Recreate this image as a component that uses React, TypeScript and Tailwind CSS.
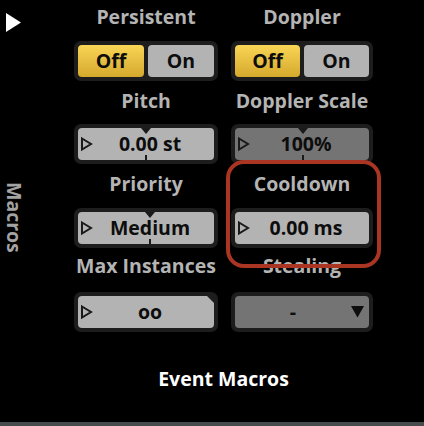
import React from "react";

function Frame({ children }: { children: React.ReactNode }) {
  return <div className="h-[40px] rounded-[7px] bg-[#1d1d1d] p-[4px]">{children}</div>;
}

function PlayOutline() {
  return (
    <svg className="absolute left-[2px] top-1/2 -translate-y-1/2" width="13" height="15" viewBox="0 0 13 15">
      <path d="M2 2 L11 7.5 L2 13 Z" fill="none" stroke="#1a1a1a" strokeWidth="2" strokeLinejoin="miter" />
    </svg>
  );
}

function Knob({
  value,
  notch,
  dark,
  corner,
}: {
  value: string;
  notch?: string;
  dark?: boolean;
  corner?: boolean;
}) {
  return (
    <Frame>
      <div
        className={
          "relative h-full rounded-[4px] flex items-center justify-center " +
          (dark ? "bg-[#747474] " : "bg-[#b3b3b3] ") +
          (corner ? "[clip-path:polygon(0_0,calc(100%-7px)_0,100%_7px,100%_100%,0_100%)]" : "")
        }
      >
        <PlayOutline />
        <span className="pl-[8px] text-[19.5px] leading-[24px] font-bold text-[#0d0d0d]">{value}</span>
        {notch && (
          <>
            <div className={"absolute top-0 h-0 w-0 border-l-[5px] border-r-[5px] border-t-[6px] border-l-transparent border-r-transparent border-t-[#1a1a1a] -translate-x-1/2 " + notch}></div>
            <div className={"absolute bottom-0 h-[5px] w-[2px] bg-[#1a1a1a] -translate-x-1/2 " + notch}></div>
          </>
        )}
      </div>
    </Frame>
  );
}

function Toggle() {
  return (
    <Frame>
      <div className="flex h-full gap-[4px]">
        <div className="flex flex-1 items-center justify-center rounded-[4px] bg-gradient-to-b from-[#f9d555] to-[#d5a92c] text-[19.5px] leading-[24px] font-bold text-[#0d0d0d]">
          Off
        </div>
        <div className="flex flex-1 items-center justify-center rounded-[4px] bg-[#b3b3b3] text-[19.5px] leading-[24px] font-bold text-[#0d0d0d]">
          On
        </div>
      </div>
    </Frame>
  );
}

function Dropdown() {
  return (
    <Frame>
      <div className="relative flex h-full items-center rounded-[4px] bg-[#747474]">
        <span className="w-full pr-[18px] text-center text-[19.5px] leading-[24px] font-bold text-[#0d0d0d]">-</span>
        <svg className="absolute right-[5px] top-[10px]" width="13" height="12" viewBox="0 0 13 12">
          <path d="M0 0 L13 0 L6.5 11.5 Z" fill="#0d0d0d" />
        </svg>
      </div>
    </Frame>
  );
}

function Label({ text, cls }: { text: string; cls: string }) {
  return (
    <div className={"text-center text-[19.5px] leading-[24px] font-bold text-[#b4b4b4] " + cls}>{text}</div>
  );
}

export default function App() {
  return (
    <div className="relative flex h-[426px] w-[424px] flex-col overflow-hidden bg-black font-['Open_Sans',sans-serif]">
      <div className="flex">
        <div className="flex w-[74px] flex-col">
          <div className="flex w-[27px] flex-col items-center pt-[13px]">
            <svg width="15" height="19" viewBox="0 0 15 19">
              <path d="M0 0 L15 9.5 L0 19 Z" fill="#ffffff" />
            </svg>
            <div className="mt-[150px] text-[19.5px] leading-[24px] font-bold text-[#a3a3a3] [writing-mode:vertical-rl]">
              Macros
            </div>
          </div>
        </div>
        <div className="grid grid-cols-[144px_142px] gap-x-[13px]">
          <div>
            <Label text="Persistent" cls="h-[41px] pt-[5px]" />
            <Toggle />
            <Label text="Pitch" cls="h-[43px] pt-[8px]" />
            <Knob value="0.00 st" notch="left-[68px]" />
            <Label text="Priority" cls="h-[44px] pt-[8px]" />
            <Knob value="Medium" notch="left-[72px]" />
            <Label text="Max Instances" cls="h-[44px] pt-[6px]" />
            <Knob value="oo" corner />
          </div>
          <div>
            <Label text="Doppler" cls="h-[41px] pt-[5px]" />
            <Toggle />
            <Label text="Doppler Scale" cls="h-[43px] pt-[8px]" />
            <Knob value="100%" notch="left-[68px]" dark />
            <Label text="Cooldown" cls="h-[44px] pt-[8px]" />
            <Knob value="0.00 ms" />
            <Label text="Stealing" cls="h-[44px] pt-[6px]" />
            <Dropdown />
          </div>
        </div>
      </div>
      <div className="flex pl-[74px]">
        <div className="w-[299px] pt-[35px] text-center text-[19.5px] leading-[24px] font-bold text-white">Event Macros</div>
      </div>
      <div className="flex-1"></div>
      <div className="h-[4px] bg-[#484b4b]"></div>
      <div className="pointer-events-none absolute left-[226px] top-[160px] h-[108px] w-[155px] rounded-[18px] border-[4px] border-[#a93522]"></div>
    </div>
  );
}
